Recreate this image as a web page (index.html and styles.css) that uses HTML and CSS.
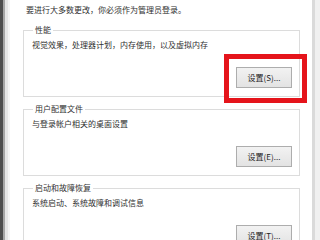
FILE: index.html
```html
<!DOCTYPE html>
<html lang="zh-CN">
<head>
<meta charset="utf-8">
<title>系统属性</title>
<link rel="stylesheet" href="styles.css">
</head>
<body>
<div class="edge-l"></div>
<div class="main">
  <p class="intro">要进行大多数更改，你必须作为管理员登录。</p>
  <fieldset class="group">
    <legend>性能</legend>
    <p class="desc">视觉效果，处理器计划，内存使用，以及虚拟内存</p>
    <button class="btn">设置(S)...</button>
  </fieldset>
  <fieldset class="group">
    <legend>用户配置文件</legend>
    <p class="desc">与登录帐户相关的桌面设置</p>
    <button class="btn">设置(E)...</button>
  </fieldset>
  <fieldset class="group">
    <legend>启动和故障恢复</legend>
    <p class="desc">系统启动、系统故障和调试信息</p>
    <button class="btn">设置(T)...</button>
  </fieldset>
</div>
<div class="edge-r"></div>
<div class="highlight"></div>
</body>
</html>
```
FILE: styles.css
```css
html, body {
  margin: 0;
  padding: 0;
}
body {
  width: 320px;
  height: 240px;
  overflow: hidden;
  display: flex;
  background: #ffffff;
  font-family: "Noto Sans CJK SC", "Noto Sans", sans-serif;
  font-size: 8px;
  color: #303030;
  position: relative;
}
.edge-l {
  width: 10px;
  flex: none;
  background: linear-gradient(to right, #4e4e4e 0 3px, #a6a6a6 3px 5px, #e6e6e6 5px 8px, #f6f6f6 8px 10px);
}
.main {
  flex: 1;
  padding: 4px 12px 0 13px;
  overflow: hidden;
}
.edge-r {
  width: 8px;
  flex: none;
  background: linear-gradient(to right, #dadada 0 3px, #f0f0f0 3px);
}
.intro {
  margin: 0;
  padding-left: 3px;
  line-height: 12px;
}
.group {
  margin: 9px 0 0 0;
  padding: 4px 7px 8px 6px;
  border: 1px solid #dcdcdc;
  display: flex;
  flex-direction: column;
  min-width: 0;
}
.group + .group {
  margin-top: 7px;
}
.group legend {
  padding: 0 2px;
  margin-left: 3px;
  line-height: 10px;
  color: #333;
}
.desc {
  margin: 0;
  padding-left: 2px;
  line-height: 12px;
}
.btn {
  align-self: flex-end;
  margin-top: 16px;
  width: 56px;
  height: 21px;
  padding: 0;
  font-family: inherit;
  font-size: 8px;
  color: #222;
  background: linear-gradient(#f2f2f2, #e3e3e3);
  border: 1px solid #adadad;
  border-radius: 0;
}
.highlight {
  position: absolute;
  left: 224px;
  top: 54px;
  width: 73px;
  height: 39px;
  border: 5px solid #e5141b;
}
```
